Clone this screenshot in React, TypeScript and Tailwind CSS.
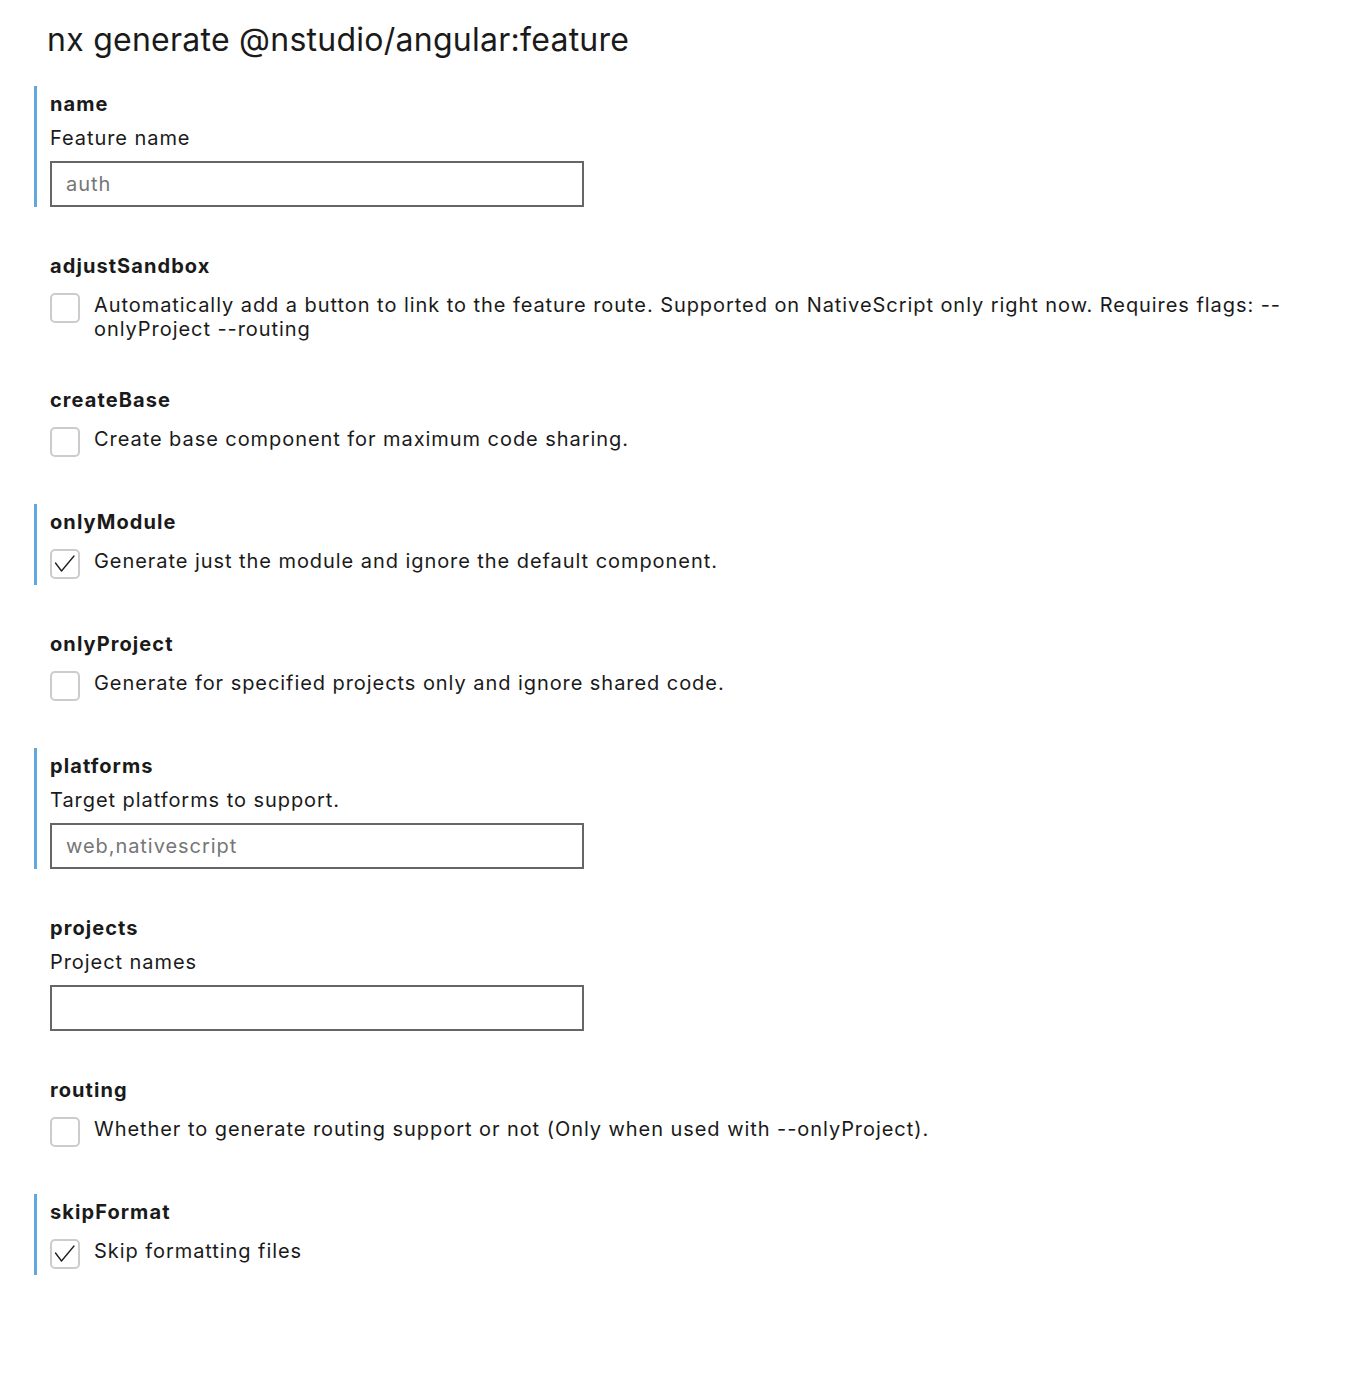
import type { ReactNode } from 'react';

type Field =
  | { kind: 'text'; name: string; desc: string; placeholder: string; set: boolean }
  | { kind: 'bool'; name: string; desc: string; checked: boolean };

const fields: Field[] = [
  { kind: 'text', name: 'name', desc: 'Feature name', placeholder: 'auth', set: true },
  {
    kind: 'bool',
    name: 'adjustSandbox',
    desc: 'Automatically add a button to link to the feature route. Supported on NativeScript only right now. Requires flags: --onlyProject --routing',
    checked: false
  },
  { kind: 'bool', name: 'createBase', desc: 'Create base component for maximum code sharing.', checked: false },
  { kind: 'bool', name: 'onlyModule', desc: 'Generate just the module and ignore the default component.', checked: true },
  { kind: 'bool', name: 'onlyProject', desc: 'Generate for specified projects only and ignore shared code.', checked: false },
  { kind: 'text', name: 'platforms', desc: 'Target platforms to support.', placeholder: 'web,nativescript', set: true },
  { kind: 'text', name: 'projects', desc: 'Project names', placeholder: '', set: false },
  {
    kind: 'bool',
    name: 'routing',
    desc: 'Whether to generate routing support or not (Only when used with --onlyProject).',
    checked: false
  },
  { kind: 'bool', name: 'skipFormat', desc: 'Skip formatting files', checked: true }
];

function Section({ marked, children }: { marked: boolean; children: ReactNode }) {
  return (
    <div className={`border-l-[3px] pl-[13px] pt-[6px] ${marked ? 'border-[#62a8de]' : 'border-transparent'}`}>
      {children}
    </div>
  );
}

function Checkbox({ checked }: { checked: boolean }) {
  return (
    <span className="mb-[6px] flex h-[30px] w-[30px] shrink-0 items-center justify-center rounded-[5px] border-2 border-[#cccccc] bg-white">
      {checked && (
        <svg width="26" height="26" viewBox="0 0 26 26" fill="none">
          <path d="M3.5 12 L9.5 20 L22 5" stroke="#1a1a1a" strokeWidth="1.3" strokeLinecap="round" strokeLinejoin="round" />
        </svg>
      )}
    </span>
  );
}

export default function App() {
  return (
    <div
      className="min-h-screen bg-white pl-[34px] pr-[48px] pt-[20px] pb-[80px] text-[#1a1a1a]"
      style={{ fontFamily: 'Inter, "Noto Sans", sans-serif' }}
    >
      <h1 className="pl-[13px] text-[32px] leading-[40px] font-normal tracking-[0.008em]">nx generate @nstudio/angular:feature</h1>
      <div className="mt-[26px] flex flex-col gap-[41px]">
        {fields.map((f) => (
          <Section key={f.name} marked={f.kind === 'bool' ? f.checked : f.set}>
            <div className="text-[20px] leading-[24px] font-bold tracking-[0.054em]">{f.name}</div>
            {f.kind === 'text' ? (
              <>
                <div className="mt-[10px] text-[20px] leading-[24px] tracking-[0.047em]">{f.desc}</div>
                <div className="mt-[11px] flex h-[46px] w-[534px] items-center border-2 border-[#666666] px-[14px] text-[20px] tracking-[0.047em] text-[#767676]">
                  {f.placeholder}
                </div>
              </>
            ) : (
              <div className="mt-[15px] flex items-start gap-[14px]">
                <Checkbox checked={f.checked} />
                <div className="text-[20px] leading-[24px] tracking-[0.047em]">{f.desc}</div>
              </div>
            )}
          </Section>
        ))}
      </div>
    </div>
  );
}
